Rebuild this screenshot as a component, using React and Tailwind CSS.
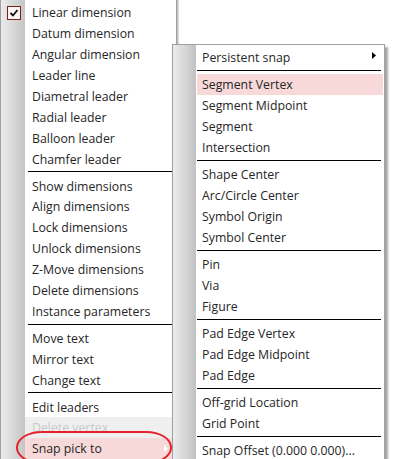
import React from "react";

const leftItems = [
  { t: "Linear dimension", check: true },
  { t: "Datum dimension" },
  { t: "Angular dimension" },
  { t: "Leader line" },
  { t: "Diametral leader" },
  { t: "Radial leader" },
  { t: "Balloon leader" },
  { t: "Chamfer leader" },
  { sep: true },
  { t: "Show dimensions" },
  { t: "Align dimensions" },
  { t: "Lock dimensions" },
  { t: "Unlock dimensions" },
  { t: "Z-Move dimensions" },
  { t: "Delete dimensions" },
  { t: "Instance parameters" },
  { sep: true },
  { t: "Move text" },
  { t: "Mirror text" },
  { t: "Change text" },
  { sep: true },
  { t: "Edit leaders" },
  { t: "Delete vertex", disabled: true },
  { t: "Snap pick to", hot: true, sub: true },
];

const subItems = [
  { t: "Persistent snap", sub: true },
  { sep: true },
  { t: "Segment Vertex", hot: true },
  { t: "Segment Midpoint" },
  { t: "Segment" },
  { t: "Intersection" },
  { sep: true },
  { t: "Shape Center" },
  { t: "Arc/Circle Center" },
  { t: "Symbol Origin" },
  { t: "Symbol Center" },
  { sep: true },
  { t: "Pin" },
  { t: "Via" },
  { t: "Figure" },
  { sep: true },
  { t: "Pad Edge Vertex" },
  { t: "Pad Edge Midpoint" },
  { t: "Pad Edge" },
  { sep: true },
  { t: "Off-grid Location" },
  { t: "Grid Point" },
  { sep: true },
  { t: "Snap Offset (0.000 0.000)..." },
];

function Arrow({ color }) {
  return (
    <svg width="4" height="7" viewBox="0 0 4 7" className="shrink-0">
      <path d="M0 0 L4 3.5 L0 7 Z" fill={color} />
    </svg>
  );
}

function CheckBox() {
  return (
    <div className="w-[14px] h-[14px] border border-[#7a1e1e] bg-[#fbf5f5] flex items-center justify-center">
      <svg width="10" height="10" viewBox="0 0 10 10">
        <path d="M1.5 5 L4 7.5 L8.5 2" fill="none" stroke="#111" strokeWidth="1.8" />
      </svg>
    </div>
  );
}

function LeftMenu() {
  return (
    <div className="flex w-[179px] h-[459px] shrink-0">
      <div className="w-px bg-[#a0a0a0]" />
      <div className="w-[24px] bg-linear-to-r from-[#ececec] to-[#c5c5c5] pt-[2px] flex flex-col">
        <div className="h-[21px] flex items-center pl-[6px]">
          <CheckBox />
        </div>
      </div>
      <div className="flex-1 bg-white pt-[2px] flex flex-col">
        {leftItems.map((it, i) =>
          it.sep ? (
            <div key={i} className="h-[6px] pt-[2px] pl-[3px]">
              <div className="h-px bg-black" />
            </div>
          ) : (
            <div
              key={i}
              className={
                "h-[21px] pt-[2px] flex items-center justify-between pl-[7px] pr-[8px] " +
                (it.disabled
                  ? "bg-[#efefef] text-[#cacaca]"
                  : it.hot
                  ? "bg-[#f7d9d9] text-[#262626]"
                  : "text-[#262626]")
              }
            >
              <span>{it.t}</span>
              {it.sub && (
                <span className="-mt-[2px]">
                  <Arrow color="#ffffff" />
                </span>
              )}
            </div>
          )
        )}
      </div>
      <div className="w-px bg-[#a0a0a0]" />
      <div className="w-[2px] bg-linear-to-r from-[#b8b8b8] to-[#e4e4e4]" />
    </div>
  );
}

function SubMenu() {
  return (
    <div className="absolute left-[172px] top-[44px] w-[213px] h-[430px] border border-[#a0a0a0] bg-white flex shadow-[3px_3px_2px_rgba(0,0,0,0.35)]">
      <div className="w-[23px] bg-linear-to-r from-[#ececec] to-[#c2c2c2]" />
      <div className="flex-1 pt-[2px] flex flex-col">
        {subItems.map((it, i) =>
          it.sep ? (
            <div key={i} className="h-[6px] pt-[2px] pl-px pr-[3px]">
              <div className="h-px bg-black" />
            </div>
          ) : (
            <div
              key={i}
              className={
                "h-[21px] pt-[2px] mx-px flex items-center justify-between pl-[5px] pr-[7px] text-[#262626] " +
                (it.hot ? "bg-[#f7d9d9]" : "")
              }
            >
              <span>{it.t}</span>
              {it.sub && (
                <span className="-mt-[6px]">
                  <Arrow color="#000000" />
                </span>
              )}
            </div>
          )
        )}
      </div>
    </div>
  );
}

export default function App() {
  return (
    <div className="relative w-[398px] h-[459px] overflow-hidden bg-white font-['Open_Sans',sans-serif] text-[12.3px] leading-none">
      <LeftMenu />
      <div className="absolute left-[16px] top-[431px] w-[156px] h-[33px] border-2 border-[#e3222b] rounded-[26px/16px]" />
      <SubMenu />
    </div>
  );
}
